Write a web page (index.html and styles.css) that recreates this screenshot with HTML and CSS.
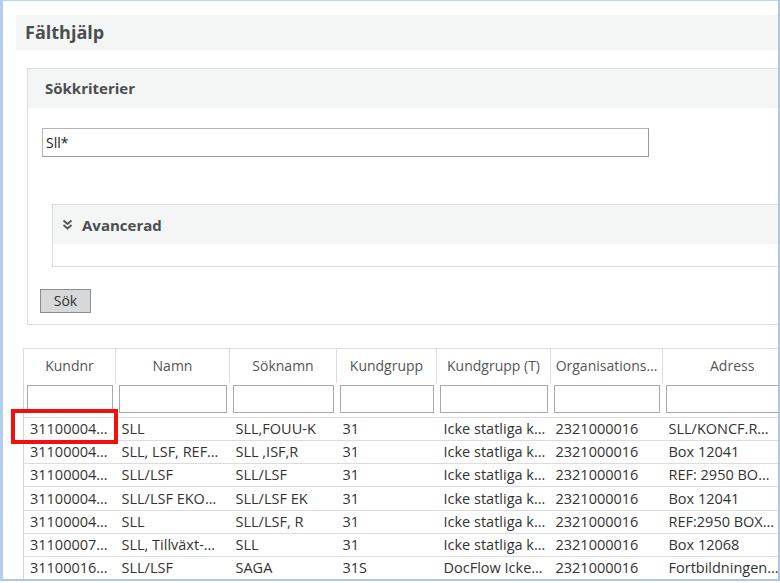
FILE: index.html
```html
<!DOCTYPE html>
<html lang="sv">
<head>
<meta charset="utf-8">
<title>Fälthjälp</title>
<link rel="stylesheet" href="styles.css">
</head>
<body>
<div class="frame">
  <div class="content">
    <div class="titlebar">Fälthjälp</div>
    <div class="body">
      <section class="panel">
        <div class="panel-head">Sökkriterier</div>
        <div class="panel-body">
          <div class="search-input">Sll*</div>
          <section class="adv">
            <div class="adv-head">
              <svg class="chev" width="11" height="11" viewBox="0 0 11 11"><path d="M1.5 1.5 L5.5 5 L9.5 1.5 M1.5 6 L5.5 9.5 L9.5 6" fill="none" stroke="#505050" stroke-width="1.7"/></svg>
              <span>Avancerad</span>
            </div>
            <div class="adv-body"></div>
          </section>
          <button class="btn">Sök</button>
        </div>
      </section>

      <table class="grid">
        <colgroup>
          <col class="c1"><col class="c2"><col class="c3"><col class="c4"><col class="c5"><col class="c6"><col class="c7">
        </colgroup>
        <thead>
          <tr class="hdr">
            <th>Kundnr</th><th>Namn</th><th>Söknamn</th><th>Kundgrupp</th><th>Kundgrupp (T)</th><th>Organisations…</th><th>Adress</th>
          </tr>
          <tr class="flt">
            <th><div class="fi"></div></th><th><div class="fi"></div></th><th><div class="fi"></div></th><th><div class="fi"></div></th><th><div class="fi"></div></th><th><div class="fi"></div></th><th><div class="fi"></div></th>
          </tr>
        </thead>
        <tbody>
          <tr><td class="sel">31100004…<span class="mark"></span></td><td>SLL</td><td>SLL,FOUU-K</td><td>31</td><td>Icke statliga k…</td><td>2321000016</td><td>SLL/KONCF.R…</td></tr>
          <tr><td>31100004…</td><td>SLL, LSF, REF…</td><td>SLL ,ISF,R</td><td>31</td><td>Icke statliga k…</td><td>2321000016</td><td>Box 12041</td></tr>
          <tr><td>31100004…</td><td>SLL/LSF</td><td>SLL/LSF</td><td>31</td><td>Icke statliga k…</td><td>2321000016</td><td>REF: 2950 BO…</td></tr>
          <tr><td>31100004…</td><td>SLL/LSF EKO…</td><td>SLL/LSF EK</td><td>31</td><td>Icke statliga k…</td><td>2321000016</td><td>Box 12041</td></tr>
          <tr><td>31100004…</td><td>SLL</td><td>SLL/LSF, R</td><td>31</td><td>Icke statliga k…</td><td>2321000016</td><td>REF:2950 BOX…</td></tr>
          <tr><td>31100007…</td><td>SLL, Tillväxt-…</td><td>SLL</td><td>31</td><td>Icke statliga k…</td><td>2321000016</td><td>Box 12068</td></tr>
          <tr><td>31100016…</td><td>SLL/LSF</td><td>SAGA</td><td>31S</td><td>DocFlow Icke…</td><td>2321000016</td><td>Fortbildningen…</td></tr>
        </tbody>
      </table>
    </div>
  </div>
</div>
</body>
</html>
```

FILE: styles.css
```css
* { box-sizing: border-box; }
html, body { margin: 0; padding: 0; background: #fff; }
body { font-family: "Open Sans", "Noto Sans", sans-serif; color: #333; }

.frame {
  width: 780px;
  height: 581px;
  border-left: 3px solid #b3cfee;
  border-top: 1px solid #bcd4ee;
  border-right: 2px solid #aac7ea;
  border-bottom: 2px solid #aac7ea;
  overflow: hidden;
  background: #fff;
}
.content { padding: 14px 0 0 13px; width: 900px; }

.titlebar {
  height: 35px;
  background: #f4f5f5;
  padding-left: 9px;
  font-weight: 700;
  font-size: 18px;
  line-height: 35px;
  color: #4b4d4f;
  width: 762px;
}

.body { padding-left: 7px; }

.panel {
  margin-top: 18px;
  margin-left: 4px;
  border: 1px solid #dcdcdc;
  width: 880px;
}
.panel-head {
  height: 39px;
  background: #f4f5f5;
  padding-left: 17px;
  font-weight: 700;
  font-size: 15px;
  line-height: 39px;
  color: #4b4d4f;
}
.panel-body { padding: 20px 0 11px 14px; }

.search-input {
  width: 607px;
  height: 29px;
  border: 1px solid #b5b5b5;
  border-right-color: #9a9a9a;
  border-bottom-color: #9a9a9a;
  font-size: 14px;
  line-height: 27px;
  padding-left: 3px;
  color: #222;
}

.adv {
  margin-top: 47px;
  margin-left: 10px;
  border: 1px solid #dcdcdc;
}
.adv-head {
  height: 39px;
  background: #f4f5f5;
  display: flex;
  align-items: center;
  padding-left: 9px;
  gap: 9px;
  font-weight: 700;
  font-size: 15px;
  color: #4b4d4f;
}
.chev { display: block; }
.adv-body { height: 22px; }

.btn {
  display: block;
  margin-top: 22px;
  margin-left: -2px;
  width: 51px;
  height: 24px;
  background: #d6d8da;
  border: 1px solid #8c8c8c;
  font-family: "Open Sans", "Noto Sans", sans-serif;
  font-size: 14px;
  color: #333;
  padding: 0;
  line-height: 20px;
}

.grid {
  margin-top: 23px;
  border-collapse: collapse;
  table-layout: fixed;
  width: 874px;
  border-left: 1px solid #d4d4d4;
}
.c1 { width: 92px; } .c2 { width: 114px; } .c3 { width: 107px; } .c4 { width: 100px; }
.c5 { width: 114px; } .c6 { width: 112px; } .c7 { width: 235px; }

.hdr th {
  height: 34px;
  font-weight: 400;
  font-size: 14px;
  color: #555;
  border: 1px solid #dcdcdc;
  border-bottom: none;
  white-space: nowrap;
  overflow: hidden;
  padding: 0 4px;
  text-align: center;
}
.hdr th:nth-child(7) { text-align: left; padding-left: 47px; }
.flt th {
  height: 34px;
  padding: 2px 3px 4px;
  border-bottom: 1px solid #dcdcdc;
}
.fi {
  height: 28px;
  border: 1px solid #aaaaaa;
  background: #fff;
}
.grid td {
  height: 23.3px;
  padding: 0 0 0 6px;
  font-size: 14.5px;
  color: #333;
  white-space: nowrap;
  overflow: hidden;
  border-bottom: 1px solid #dcdcdc;
  line-height: 22px;
}
.grid td:nth-child(5) { padding-left: 7px; }
.grid td:nth-child(6) { padding-left: 5px; }
.grid td.sel { position: relative; overflow: visible; }
.mark {
  position: absolute;
  left: -13px;
  top: -9px;
  width: 107px;
  height: 35px;
  border: 4px solid #f01010;
  pointer-events: none;
}
```
